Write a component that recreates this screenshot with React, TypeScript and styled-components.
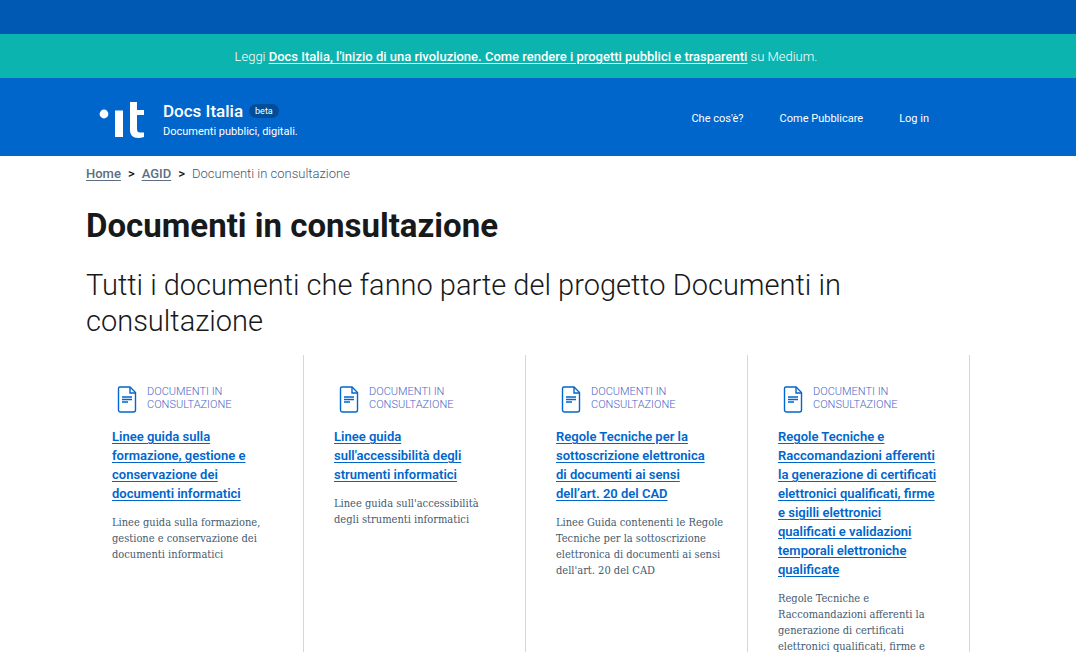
import React from 'react';
import styled, { createGlobalStyle } from 'styled-components';

const GlobalStyle = createGlobalStyle`
  *, *::before, *::after { box-sizing: border-box; }
  body {
    margin: 0;
    background: #fff;
    color: #17191a;
    font-family: Roboto, "Liberation Sans", sans-serif;
  }
  h1, h2, p, ol, ul { margin: 0; padding: 0; }
`;

const Page = styled.div`
  min-height: 100vh;
`;

const TopBar = styled.div`
  height: 34px;
  background: #0059b3;
`;

const Notice = styled.p`
  padding: 12px 24px 10px 0;
  background: #0bb4ae;
  color: #fff;
  font-size: 13px;
  font-weight: 300;
  line-height: 22px;
  text-align: center;

  a {
    color: inherit;
    font-weight: 500;
    text-underline-offset: 2px;
  }
`;

const Header = styled.header`
  display: flex;
  align-items: center;
  justify-content: space-between;
  padding: 18px 147px 14px 99px;
  background: #0066cc;
  color: #fff;
`;

const Brand = styled.a`
  display: flex;
  align-items: center;
  gap: 18px;
  padding-top: 4px;
  color: inherit;
  text-decoration: none;
`;

const BrandName = styled.span`
  display: flex;
  align-items: center;
  gap: 6px;
  font-size: 17px;
  font-weight: 500;
  line-height: 22px;
`;

const BrandTagline = styled.span`
  display: block;
  font-size: 11px;
  line-height: 20px;
`;

const Badge = styled.span`
  padding: 0 6px;
  border-radius: 7px;
  background: #004d99;
  font-size: 9px;
  font-weight: 400;
  line-height: 14px;
`;

const Nav = styled.nav`
  display: flex;
  gap: 36px;
`;

const NavLink = styled.a`
  color: inherit;
  font-size: 11px;
  line-height: 20px;
  text-decoration: none;
`;

const Main = styled.main`
  padding: 0 106px 0 82px;
`;

const Intro = styled.div`
  padding: 0 4px;
`;

const Breadcrumb = styled.ol`
  display: flex;
  padding-top: 7px;
  list-style: none;
  color: #455667;
  font-size: 13px;
  font-weight: 300;
  line-height: 22px;

  li + li::before {
    content: ">";
    padding: 0 7px;
    color: #17191a;
    font-weight: 500;
  }
  a {
    color: #5c6f82;
    font-weight: 500;
    text-underline-offset: 2px;
  }
`;

const Title = styled.h1`
  padding-top: 20px;
  font-size: 33px;
  font-weight: 700;
  line-height: 42px;
`;

const Lead = styled.p`
  padding-top: 20px;
  font-size: 29px;
  font-weight: 300;
  line-height: 36px;
`;

const Cards = styled.ul`
  display: grid;
  grid-template-columns: repeat(4, 1fr);
  padding-top: 16px;
  list-style: none;
`;

const Card = styled.li`
  padding: 30px 22px 30px 30px;
  border-right: 1px solid #d6d6d6;
`;

const Category = styled.div`
  display: flex;
  gap: 10px;
  padding-left: 5px;
  color: #4a68c8;
  font-size: 11px;
  font-weight: 300;
  line-height: 13px;
  text-transform: uppercase;
`;

const CardTitle = styled.h2`
  padding: 14px 8px 0 0;
  font-size: 13px;
  font-weight: 600;
  line-height: 19px;

  a {
    color: #0066cc;
    text-underline-offset: 2px;
  }
`;

const CardText = styled.p`
  padding-top: 12px;
  color: #435a70;
  font-family: "DejaVu Serif Condensed", "DejaVu Serif", serif;
  font-size: 11px;
  line-height: 16px;
`;

const Logo = () => (
  <svg width="46" height="38" viewBox="0 0 46 38" fill="#fff" aria-hidden="true">
    <circle cx="5" cy="12" r="4.4" />
    <path d="M16 8.500h8V35h-8zM31 0h7v8h7v5h-7v14c0 2.500 1 3.500 3 3.500h4V35c-2 .7-4 1-6 1-5 0-8-3-8-8z" />
  </svg>
);

const DocumentIcon = () => (
  <svg width="20" height="28" viewBox="0 0 20 28" fill="none" stroke="#0066cc" strokeWidth="1.4" aria-hidden="true">
    <path d="M3 2h10l5.500 5.500V25a2 2 0 0 1-2 2h-13a2 2 0 0 1-2-2V3.500A1.500 1.500 0 0 1 3 2z" />
    <path d="M13 2v6h5.500M5 12h10M5 14.500h10M5 17h6" />
  </svg>
);

const documents = [
  {
    title: 'Linee guida sulla formazione, gestione e conservazione dei documenti informatici',
    text: 'Linee guida sulla formazione, gestione e conservazione dei documenti informatici',
  },
  {
    title: "Linee guida sull'accessibilità degli strumenti informatici",
    text: "Linee guida sull'accessibilità degli strumenti informatici",
  },
  {
    title: 'Regole Tecniche per la sottoscrizione elettronica di documenti ai sensi dell’art. 20 del CAD',
    text: "Linee Guida contenenti le Regole Tecniche per la sottoscrizione elettronica di documenti ai sensi dell'art. 20 del CAD",
  },
  {
    title:
      'Regole Tecniche e Raccomandazioni afferenti la generazione di certificati elettronici qualificati, firme e sigilli elettronici qualificati e validazioni temporali elettroniche qualificate',
    text: 'Regole Tecniche e Raccomandazioni afferenti la generazione di certificati elettronici qualificati, firme e',
  },
];

export default function App() {
  return (
    <Page>
      <GlobalStyle />
      <TopBar />
      <Notice>
        Leggi{' '}
        <a href="#medium">
          Docs Italia, l'inizio di una rivoluzione. Come rendere i progetti pubblici e trasparenti
        </a>{' '}
        su Medium.
      </Notice>
      <Header>
        <Brand href="#home">
          <Logo />
          <span>
            <BrandName>
              Docs Italia <Badge>beta</Badge>
            </BrandName>
            <BrandTagline>Documenti pubblici, digitali.</BrandTagline>
          </span>
        </Brand>
        <Nav>
          <NavLink href="#about">Che cos'è?</NavLink>
          <NavLink href="#publish">Come Pubblicare</NavLink>
          <NavLink href="#login">Log in</NavLink>
        </Nav>
      </Header>
      <Main>
        <Intro>
          <Breadcrumb>
            <li><a href="#home">Home</a></li>
            <li><a href="#agid">AGID</a></li>
            <li>Documenti in consultazione</li>
          </Breadcrumb>
          <Title>Documenti in consultazione</Title>
          <Lead>Tutti i documenti che fanno parte del progetto Documenti in consultazione</Lead>
        </Intro>
        <Cards>
          {documents.map((doc) => (
            <Card key={doc.title}>
              <Category>
                <DocumentIcon />
                <span>Documenti in<br />consultazione</span>
              </Category>
              <CardTitle><a href="#document">{doc.title}</a></CardTitle>
              <CardText>{doc.text}</CardText>
            </Card>
          ))}
        </Cards>
      </Main>
    </Page>
  );
}
